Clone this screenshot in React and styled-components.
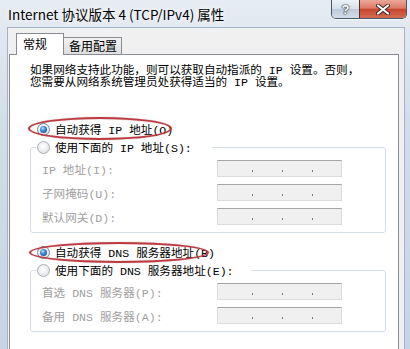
import React from 'react';
import styled, { createGlobalStyle } from 'styled-components';

const TEXT_FONT = '"Liberation Mono", "Noto Sans CJK SC", monospace';
const UI_FONT = '"Noto Sans CJK SC", "Noto Sans", sans-serif';

const GlobalStyle = createGlobalStyle`
  html, body {
    margin: 0;
    padding: 0;
    background: #ffffff;
  }
  #root {
    width: 410px;
    height: 349px;
  }
`;

const Window = styled.div`
  width: 410px;
  height: 349px;
  overflow: hidden;
  display: flex;
  flex-direction: column;
  background: linear-gradient(180deg, #e6ecf3 0%, #d3dde9 35%, #c6d4e4 100%);
`;

const TitleBar = styled.div`
  height: 27px;
  flex: none;
  display: flex;
  justify-content: space-between;
  align-items: flex-start;
  padding: 0 3px 0 8px;
`;

const Title = styled.div`
  font-family: ${UI_FONT};
  font-size: 13.5px;
  line-height: 28px;
  color: #000;
  white-space: nowrap;
  text-shadow: 0 0 6px rgba(255, 255, 255, 0.95), 0 0 10px rgba(255, 255, 255, 0.8);
`;

const Captions = styled.div`
  display: flex;
  height: 18px;
  border: 1px solid #46566b;
  border-top: none;
  border-radius: 0 0 5px 5px;
  overflow: hidden;
  box-shadow: 0 1px 0 rgba(255, 255, 255, 0.7);
`;

const HelpButton = styled.div`
  width: 27px;
  display: grid;
  place-items: center;
  background: linear-gradient(180deg, #eef2f7 0%, #d6dfea 48%, #bdcad9 52%, #d3dde9 100%);
  font-family: "Liberation Sans", sans-serif;
  font-weight: 700;
  font-size: 13px;
  line-height: 1;
  color: #fff;
  text-shadow: 0 0 1px #2b3440, 0 0 1px #2b3440, 0 0 2px #2b3440;
`;

const CloseButton = styled.div`
  width: 46px;
  display: grid;
  place-items: center;
  border-left: 1px solid #5b2b22;
  background: linear-gradient(180deg, #eaa797 0%, #dc7a66 45%, #c7462f 52%, #d36b4f 100%);
`;

const Body = styled.div`
  flex: 1;
  display: flex;
  flex-direction: column;
  margin: 0 5px 0 7px;
  padding: 5px 5px 0 1px;
  background: #f0f0f0;
  border: 1px solid #a3b3c6;
  border-bottom: none;
`;

const TabRow = styled.div`
  display: flex;
  align-items: flex-end;
  height: 21px;
  padding-left: 7px;
`;

const Tab = styled.div`
  position: relative;
  z-index: ${(p) => (p.$active ? 2 : 1)};
  box-sizing: border-box;
  height: ${(p) => (p.$active ? '22px' : '17px')};
  margin-bottom: ${(p) => (p.$active ? '-1px' : '0')};
  margin-left: ${(p) => (p.$active ? '0' : '-1px')};
  padding: ${(p) => (p.$active ? '2px 0 0 6px' : '0 0 0 5px')};
  width: ${(p) => p.$w}px;
  border: 1px solid #898c95;
  border-bottom: none;
  background: ${(p) => (p.$active ? '#ffffff' : 'linear-gradient(180deg, #f3f3f3 0%, #e8e8e8 50%, #dedede 100%)')};
  font-family: ${UI_FONT};
  font-size: 12px;
  line-height: 16px;
  color: #000;
  white-space: nowrap;
`;

const Panel = styled.div`
  flex: 1;
  background: #ffffff;
  border: 1px solid #898c95;
  border-bottom: none;
  padding: 10px 12px 0 20px;
  font-family: ${TEXT_FONT};
  font-size: 11.6px;
  color: #000;
`;

const Intro = styled.p`
  margin: 0;
  line-height: 12px;
  white-space: nowrap;
`;

const RadioRow = styled.div`
  position: relative;
  display: flex;
  align-items: center;
  gap: 5px;
  height: 14px;
  margin: ${(p) => p.$mt || 0}px 0 0 7px;
  white-space: nowrap;
`;

const Radio = styled.span`
  box-sizing: border-box;
  flex: none;
  width: 13px;
  height: 13px;
  border-radius: 50%;
  border: 1px solid ${(p) => (p.$on ? '#7d8a99' : '#a9b0b8')};
  background: radial-gradient(circle at 45% 40%, #ffffff 0%, #eef0f2 45%, #cfd4da 100%);
  display: grid;
  place-items: center;

  &::after {
    content: '';
    display: ${(p) => (p.$on ? 'block' : 'none')};
    width: 7px;
    height: 7px;
    border-radius: 50%;
    background: radial-gradient(circle at 40% 35%, #bfe3ff 0%, #3b86d6 40%, #0e3f7c 100%);
  }
`;

const Ellipse = styled.span`
  position: absolute;
  left: ${(p) => p.$x}px;
  top: ${(p) => p.$y}px;
  width: ${(p) => p.$w}px;
  height: ${(p) => p.$h}px;
  box-sizing: border-box;
  border: 2.5px solid #bd3a40;
  border-radius: 50%;
  box-shadow: 0 0 1px rgba(120, 20, 20, 0.6), inset 0 0 1px rgba(120, 20, 20, 0.5);
  pointer-events: none;
`;

const Group = styled.fieldset`
  margin: ${(p) => p.$mt || 0}px 0 0 0;
  padding: 0 0 7px 11px;
  border: 1px solid #d5dfe5;
  border-radius: 3px;
  min-width: 0;
`;

const Legend = styled.legend`
  display: flex;
  align-items: center;
  gap: 5px;
  height: 14px;
  margin-left: -6px;
  padding: 0 ${(p) => p.$pr}px 0 1px;
  white-space: nowrap;
`;

const Rows = styled.div`
  display: grid;
  grid-template-columns: 175px 125px;
  row-gap: 7px;
  margin-top: 6px;
`;

const Label = styled.span`
  align-self: end;
  line-height: 13px;
  color: #a0a0a0;
  white-space: nowrap;
`;

const IpField = styled.div`
  box-sizing: border-box;
  height: 17px;
  display: flex;
  align-items: flex-end;
  gap: 29px;
  padding: 0 0 4px 34px;
  background: #f0f0f0;
  border: 1px solid #dcdcdc;
  border-top-color: #a5a5a5;
`;

const Dot = styled.span`
  width: 1px;
  height: 2px;
  background: #7a7a7a;
`;

function CloseGlyph() {
  return (
    <svg width="14" height="11" viewBox="0 0 14 11">
      <path d="M2 1.5 L12 9.5 M12 1.5 L2 9.5" stroke="#3a2420" strokeWidth="4" strokeLinecap="round" />
      <path d="M2 1.5 L12 9.5 M12 1.5 L2 9.5" stroke="#ffffff" strokeWidth="2.2" strokeLinecap="round" />
    </svg>
  );
}

function AddressField() {
  return (
    <IpField>
      <Dot />
      <Dot />
      <Dot />
    </IpField>
  );
}

function FieldRows({ labels }) {
  return (
    <Rows>
      {labels.map((label) => (
        <React.Fragment key={label}>
          <Label>{label}</Label>
          <AddressField />
        </React.Fragment>
      ))}
    </Rows>
  );
}

export default function App() {
  return (
    <>
      <GlobalStyle />
      <Window>
        <TitleBar>
          <Title>Internet 协议版本 4 (TCP/IPv4) 属性</Title>
          <Captions>
            <HelpButton>?</HelpButton>
            <CloseButton>
              <CloseGlyph />
            </CloseButton>
          </Captions>
        </TitleBar>
        <Body>
          <TabRow>
            <Tab $active $w={48}>常规</Tab>
            <Tab $w={59}>备用配置</Tab>
          </TabRow>
          <Panel>
            <Intro>
              如果网络支持此功能，则可以获取自动指派的 IP 设置。否则，
              <br />
              您需要从网络系统管理员处获得适当的 IP 设置。
            </Intro>

            <RadioRow $mt={33}>
              <Radio $on />
              <span>自动获得 IP 地址(O)</span>
              <Ellipse $x={-9} $y={-5} $w={144} $h={23} />
            </RadioRow>
            <Group $mt={4}>
              <Legend $pr={20}>
                <Radio />
                <span>使用下面的 IP 地址(S):</span>
              </Legend>
              <FieldRows labels={['IP 地址(I):', '子网掩码(U):', '默认网关(D):']} />
            </Group>

            <RadioRow $mt={12}>
              <Radio $on />
              <span>自动获得 DNS 服务器地址(B)</span>
              <Ellipse $x={-8} $y={-3} $w={180} $h={21} />
            </RadioRow>
            <Group $mt={4}>
              <Legend $pr={17}>
                <Radio />
                <span>使用下面的 DNS 服务器地址(E):</span>
              </Legend>
              <FieldRows labels={['首选 DNS 服务器(P):', '备用 DNS 服务器(A):']} />
            </Group>
          </Panel>
        </Body>
      </Window>
    </>
  );
}
